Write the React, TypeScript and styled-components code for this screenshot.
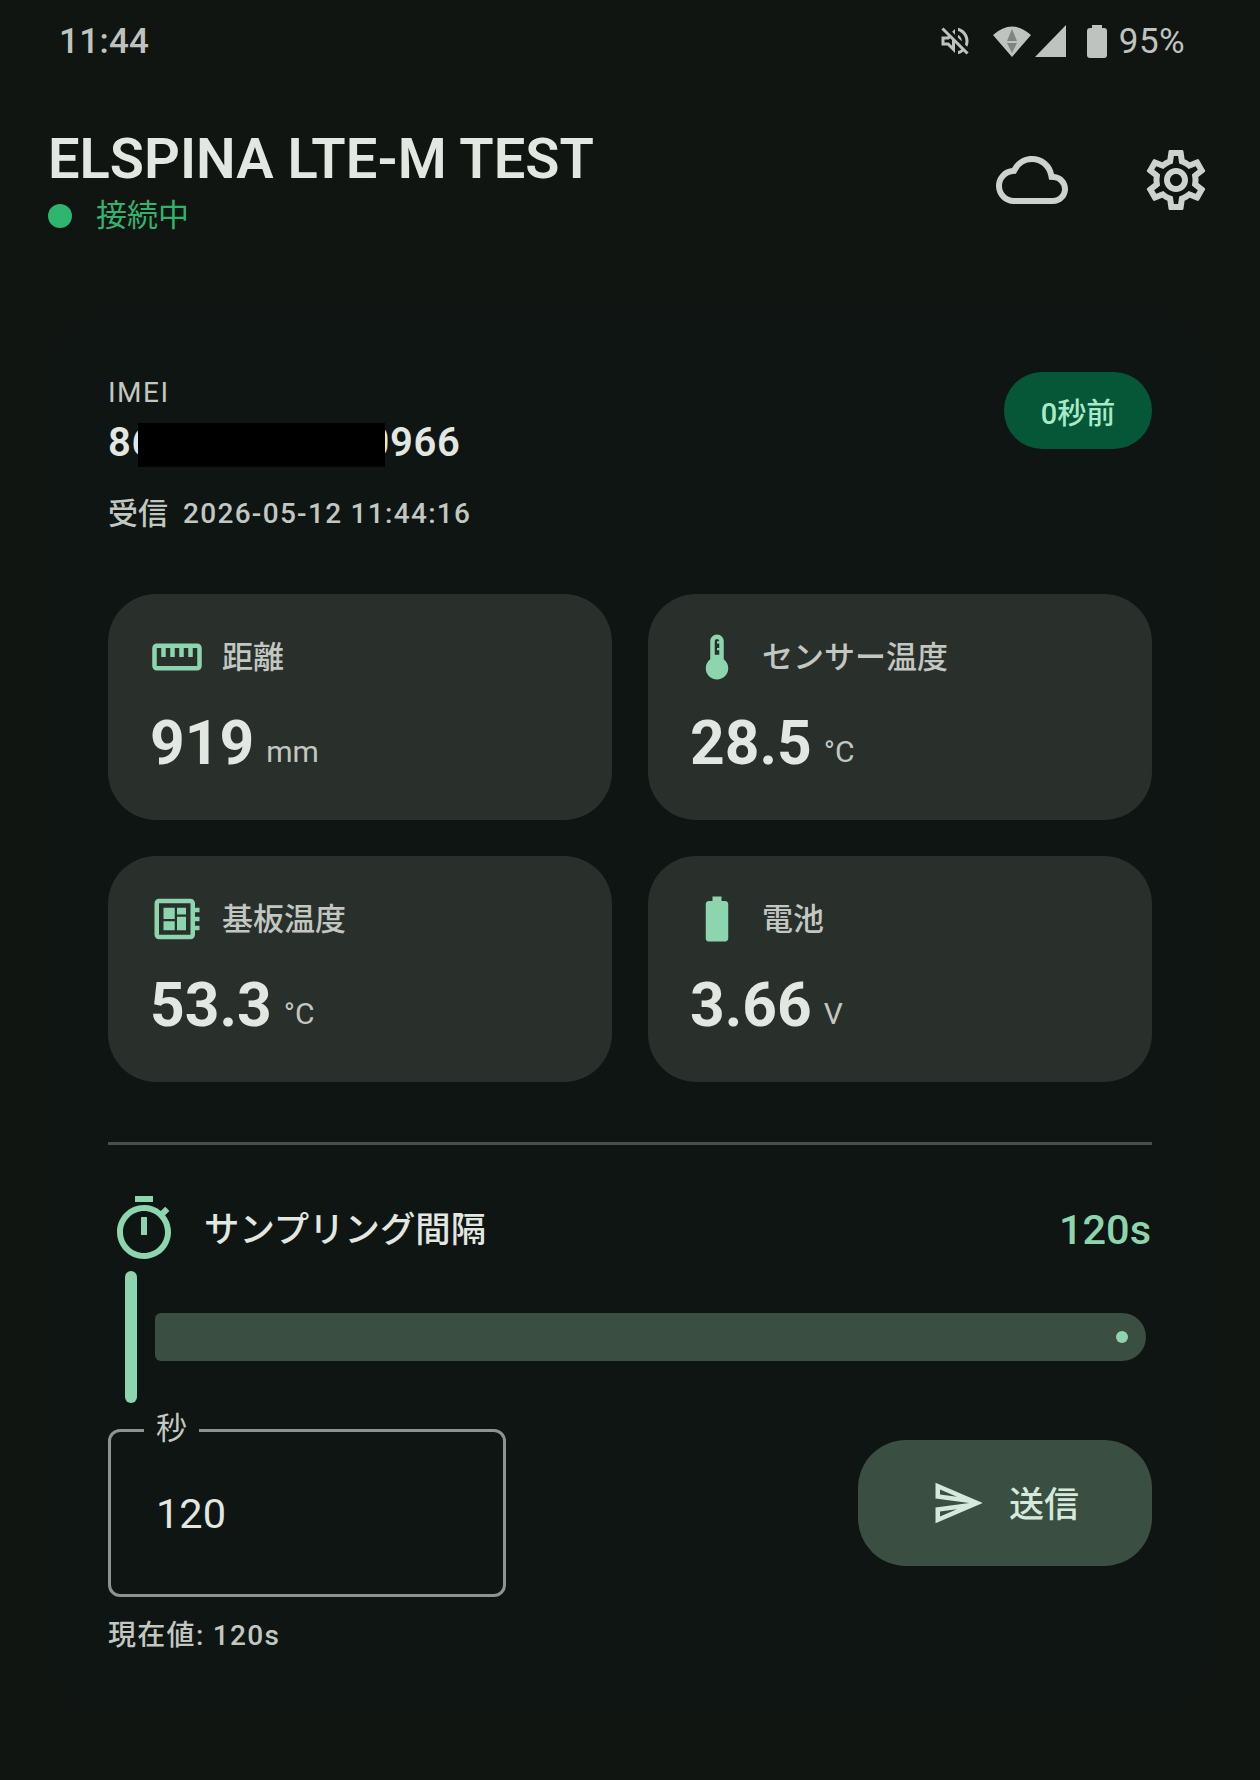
import * as React from 'react';
import styled, {createGlobalStyle} from 'styled-components';
import {
    MdBatteryFull,
    MdDeviceThermostat,
    MdOutlineCloud,
    MdOutlineDeveloperBoard,
    MdOutlineSend,
    MdOutlineSettings,
    MdOutlineStraighten,
    MdOutlineTimer,
    MdOutlineVolumeOff,
} from 'react-icons/md';

const ACCENT = '#8dd5ae';
const TEXT = '#e2e7e2';
const MUTED = '#c2c7c2';

const GlobalStyle = createGlobalStyle`
  html, body {
    margin: 0;
    padding: 0;
    background: #101512;
  }
  body {
    font-family: Roboto, "Noto Sans CJK JP", sans-serif;
    color: ${TEXT};
  }
`;

const Screen = styled.div`
  width: 1260px;
  height: 1780px;
  overflow: hidden;
  background: #101512;
`;

const StatusBar = styled.div`
  height: 82px;
  box-sizing: border-box;
  padding: 0 75px 0 59px;
  display: flex;
  align-items: center;
  justify-content: space-between;
  color: #bfc3bf;
  font-size: 35px;
`;

const Clock = styled.span`
  font-weight: 500;
  letter-spacing: 0.3px;
`;

const StatusIcons = styled.div`
  display: flex;
  align-items: center;
  color: #bfc3bf;
`;

const WifiIcon = styled.svg`
  width: 38px;
  height: 32px;
  margin-left: 20px;
`;

const SignalIcon = styled.svg`
  width: 31px;
  height: 32px;
  margin-left: 4px;
`;

const BatteryIcon = styled.svg`
  width: 20px;
  height: 33px;
  margin-left: 21px;
`;

const Percent = styled.span`
  margin-left: 12px;
  letter-spacing: 0.4px;
`;

const Header = styled.header`
  padding: 47px 48px 0 48px;
  display: flex;
  align-items: center;
  justify-content: space-between;
`;

const Title = styled.h1`
  margin: 0;
  font-size: 56px;
  line-height: 60px;
  font-weight: 600;
  color: ${TEXT};
`;

const Connection = styled.div`
  margin-top: 7px;
  display: flex;
  align-items: center;
  font-size: 31px;
  line-height: 40px;
  color: #33b26d;
`;

const ConnectionDot = styled.span`
  width: 24px;
  height: 24px;
  margin-right: 24px;
  border-radius: 50%;
  background: #2fb56d;
`;

const HeaderActions = styled.div`
  margin-top: -6px;
  display: flex;
  gap: 72px;
  color: #cdd2cd;
  font-size: 72px;
  line-height: 0;
`;

const Panel = styled.main`
  margin: 76px 48px 0;
  padding: 60px;
  border-radius: 64px;
  background: #0f1512;
`;

const DeviceRow = styled.section`
  display: flex;
  justify-content: space-between;
  align-items: flex-start;
`;

const ImeiLabel = styled.div`
  margin-top: 1px;
  font-size: 28px;
  line-height: 40px;
  letter-spacing: 1.5px;
  color: ${MUTED};
`;

const ImeiValue = styled.div`
  position: relative;
  margin-top: 7px;
  font-size: 40px;
  line-height: 46px;
  font-weight: 600;
  letter-spacing: 0.65px;
  color: ${TEXT};
`;

const Redaction = styled.span`
  position: absolute;
  left: 30px;
  top: 3px;
  width: 247px;
  height: 44px;
  background: #000;
`;

const Received = styled.div`
  margin-top: 28px;
  font-size: 28px;
  line-height: 40px;
  font-weight: 500;
  color: ${MUTED};
  display: flex;
  align-items: center;
  gap: 15px;
  letter-spacing: 1.3px;
`;

const ReceivedLabel = styled.span`
  font-size: 30px;
  letter-spacing: 0;
`;

const AgeChip = styled.div`
  width: 148px;
  height: 77px;
  border-radius: 38px;
  background: #065638;
  color: #a8eac8;
  font-size: 29px;
  font-weight: 500;
  display: flex;
  align-items: center;
  justify-content: center;
`;

const MetricGrid = styled.section`
  margin-top: 60px;
  display: grid;
  grid-template-columns: 1fr 1fr;
  gap: 36px;
`;

const MetricCard = styled.article`
  height: 226px;
  box-sizing: border-box;
  padding: 36px 42px 0;
  border-radius: 48px;
  background: #292f2b;
`;

const MetricHead = styled.div`
  display: flex;
  align-items: center;
  gap: 18px;
  font-size: 31px;
  font-weight: 500;
  color: ${MUTED};
`;

const MetricLabel = styled.span`
  margin-bottom: 6px;
`;

const MetricIcon = styled.span`
  display: flex;
  color: ${ACCENT};
  font-size: 54px;
`;

const MetricValue = styled.div`
  margin-top: 25px;
  display: flex;
  align-items: flex-end;
  gap: 12px;
`;

const Reading = styled.span`
  font-size: 60.5px;
  line-height: 70px;
  font-weight: 700;
  color: ${TEXT};
`;

const Unit = styled.span`
  margin-bottom: 10px;
  font-size: 30px;
  line-height: 34px;
  color: ${MUTED};
`;

const Divider = styled.hr`
  margin: 60px 0 0;
  border: 0;
  height: 3px;
  background: #4a4f4b;
`;

const IntervalHead = styled.div`
  margin-top: 48px;
  display: flex;
  align-items: center;
  gap: 24px;
`;

const TimerIcon = styled.span`
  display: flex;
  color: ${ACCENT};
  font-size: 72px;
`;

const IntervalTitle = styled.h2`
  flex: 1;
  margin: 0 0 6px;
  font-size: 35.4px;
  font-weight: 500;
  color: ${TEXT};
`;

const IntervalValue = styled.span`
  margin-right: 1px;
  font-size: 41.5px;
  font-weight: 500;
  color: ${ACCENT};
`;

const Slider = styled.div`
  margin-top: 6px;
  height: 132px;
  padding: 0 6px 0 17px;
  display: flex;
  align-items: center;
  gap: 18px;
`;

const SliderThumb = styled.span`
  width: 12px;
  height: 132px;
  border-radius: 6px;
  background: ${ACCENT};
`;

const SliderTrack = styled.div`
  flex: 1;
  height: 48px;
  box-sizing: border-box;
  padding-right: 18px;
  border-radius: 6px 24px 24px 6px;
  background: #3a4f42;
  display: flex;
  align-items: center;
  justify-content: flex-end;
`;

const SliderStop = styled.span`
  width: 12px;
  height: 12px;
  border-radius: 50%;
  background: ${ACCENT};
`;

const FormRow = styled.div`
  margin-top: 26px;
  display: flex;
  align-items: flex-start;
  justify-content: space-between;
`;

const SecondsField = styled.div`
  position: relative;
  width: 398px;
  height: 168px;
  box-sizing: border-box;
  padding-left: 45px;
  border: 3px solid #8e938f;
  border-radius: 12px;
  display: flex;
  align-items: center;
  font-size: 41.5px;
  color: ${TEXT};
`;

const FieldLabel = styled.span`
  position: absolute;
  left: 33px;
  top: -23px;
  padding: 0 12px;
  background: #0f1512;
  font-size: 31px;
  line-height: 40px;
  color: ${MUTED};
`;

const Helper = styled.div`
  margin-top: 19px;
  font-size: 28px;
  line-height: 40px;
  font-weight: 500;
  letter-spacing: 1.3px;
  color: ${MUTED};
`;

const SendButton = styled.button`
  width: 294px;
  height: 126px;
  margin-top: 11px;
  padding: 0;
  border: 0;
  border-radius: 48px;
  background: #3a4f42;
  color: #d5e9dc;
  font-family: inherit;
  font-size: 35px;
  font-weight: 500;
  display: flex;
  align-items: center;
  justify-content: center;
  gap: 24px;
`;

const SendLabel = styled.span`
  margin-bottom: 4px;
`;

interface Metric {
    label: string,
    value: string,
    unit: string,
    icon: React.ReactNode
}

const metrics: Metric[] = [
    {label: '距離', value: '919', unit: 'mm', icon: <MdOutlineStraighten />},
    {label: 'センサー温度', value: '28.5', unit: '°C', icon: <MdDeviceThermostat />},
    {label: '基板温度', value: '53.3', unit: '°C', icon: <MdOutlineDeveloperBoard />},
    {label: '電池', value: '3.66', unit: 'V', icon: <MdBatteryFull />},
];

const App = () => (
    <Screen>
        <GlobalStyle />
        <StatusBar>
            <Clock>11:44</Clock>
            <StatusIcons>
                <MdOutlineVolumeOff size={36} />
                <WifiIcon viewBox="0 0 38 32">
                    <path d="M0 10 Q19 -7 38 10 L19 32 Z" fill="currentColor" />
                    <path d="M19 4 L24 16 H14 Z M14 18 H24 L19 28 Z" fill="#7f8481" />
                </WifiIcon>
                <SignalIcon viewBox="0 0 31 32">
                    <path d="M31 0 V32 H0 Z" fill="currentColor" />
                </SignalIcon>
                <BatteryIcon viewBox="0 0 20 33">
                    <path d="M5 0 H15 V3 H17 A3 3 0 0 1 20 6 V30 A3 3 0 0 1 17 33 H3 A3 3 0 0 1 0 30 V6 A3 3 0 0 1 3 3 H5 Z" fill="currentColor" />
                </BatteryIcon>
                <Percent>95%</Percent>
            </StatusIcons>
        </StatusBar>

        <Header>
            <div>
                <Title>ELSPINA LTE-M TEST</Title>
                <Connection>
                    <ConnectionDot />
                    接続中
                </Connection>
            </div>
            <HeaderActions>
                <MdOutlineCloud />
                <MdOutlineSettings />
            </HeaderActions>
        </Header>

        <Panel>
            <DeviceRow>
                <div>
                    <ImeiLabel>IMEI</ImeiLabel>
                    <ImeiValue>
                        860000000000966
                        <Redaction />
                    </ImeiValue>
                    <Received>
                        <ReceivedLabel>受信</ReceivedLabel>
                        <span>2026-05-12 11:44:16</span>
                    </Received>
                </div>
                <AgeChip>0秒前</AgeChip>
            </DeviceRow>

            <MetricGrid>
                {metrics.map(metric => (
                    <MetricCard key={metric.label}>
                        <MetricHead>
                            <MetricIcon>{metric.icon}</MetricIcon>
                            <MetricLabel>{metric.label}</MetricLabel>
                        </MetricHead>
                        <MetricValue>
                            <Reading>{metric.value}</Reading>
                            <Unit>{metric.unit}</Unit>
                        </MetricValue>
                    </MetricCard>
                ))}
            </MetricGrid>

            <Divider />

            <IntervalHead>
                <TimerIcon><MdOutlineTimer /></TimerIcon>
                <IntervalTitle>サンプリング間隔</IntervalTitle>
                <IntervalValue>120s</IntervalValue>
            </IntervalHead>

            <Slider>
                <SliderThumb />
                <SliderTrack>
                    <SliderStop />
                </SliderTrack>
            </Slider>

            <FormRow>
                <div>
                    <SecondsField>
                        <FieldLabel>秒</FieldLabel>
                        120
                    </SecondsField>
                    <Helper>現在値: 120s</Helper>
                </div>
                <SendButton>
                    <MdOutlineSend size={54} />
                    <SendLabel>送信</SendLabel>
                </SendButton>
            </FormRow>
        </Panel>
    </Screen>
);

export default App;
